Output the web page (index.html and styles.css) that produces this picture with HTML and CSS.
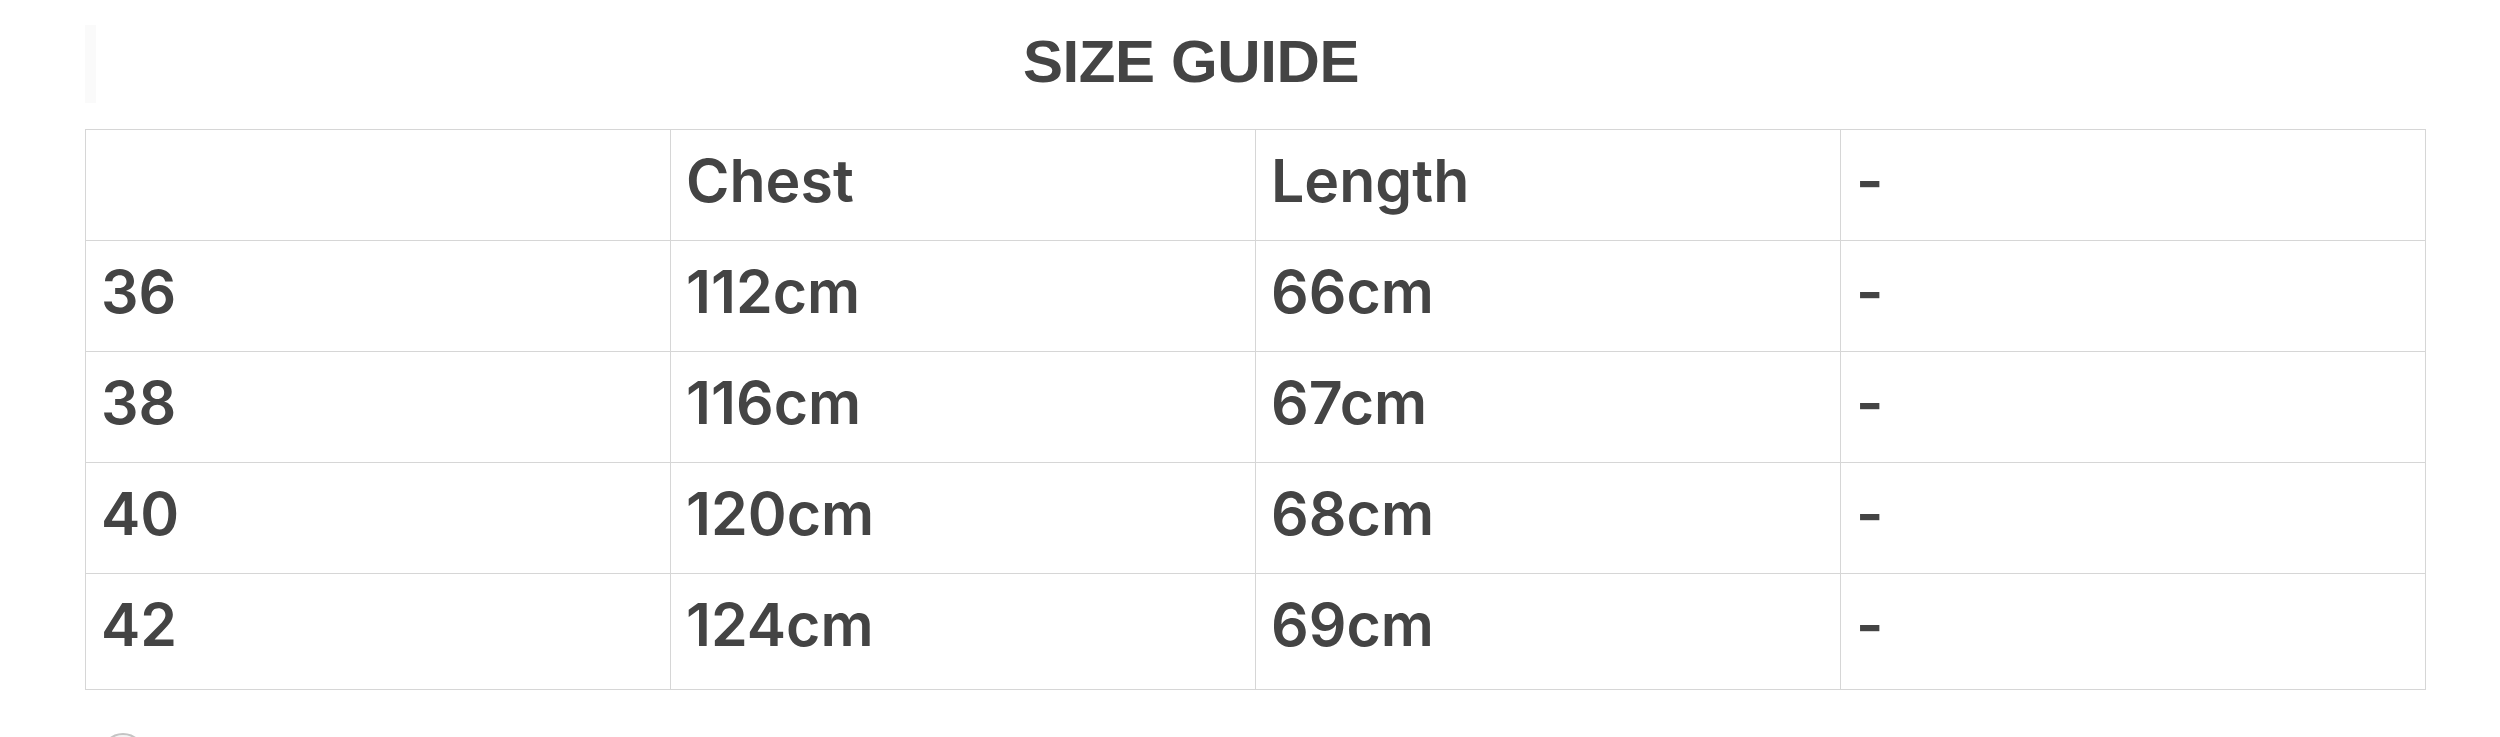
FILE: index.html
```html
<!DOCTYPE html>
<html lang="en">
<head>
<meta charset="utf-8">
<title>Size Guide</title>
<link rel="stylesheet" href="styles.css">
</head>
<body>
<div class="page">
  <header class="guide-header">
    <div class="edge-strip"></div>
    <h1 class="guide-title">SIZE GUIDE</h1>
  </header>
  <table class="size-table">
    <tbody>
      <tr><td></td><td>Chest</td><td>Length</td><td>-</td></tr>
      <tr><td>36</td><td>112cm</td><td>66cm</td><td>-</td></tr>
      <tr><td>38</td><td>116cm</td><td>67cm</td><td>-</td></tr>
      <tr><td>40</td><td>120cm</td><td>68cm</td><td>-</td></tr>
      <tr class="last-row"><td>42</td><td>124cm</td><td>69cm</td><td>-</td></tr>
    </tbody>
  </table>
  <div class="round-btn"></div>
</div>
</body>
</html>
```

FILE: styles.css
```css
html, body {
  margin: 0;
  padding: 0;
  background: #ffffff;
}

.page {
  padding: 25px 75px 0 85px;
  color: #444444;
}

.guide-header {
  display: flex;
  align-items: flex-start;
  height: 78px;
  margin-bottom: 26px;
}

.edge-strip {
  width: 11px;
  height: 78px;
  background: #fafafa;
  flex: none;
}

.guide-title {
  flex: 1;
  margin: 0;
  padding-right: 139px;
  text-align: center;
  font-family: "Liberation Sans", Arial, sans-serif;
  font-weight: 700;
  font-size: 60px;
  line-height: 74px;
  letter-spacing: -0.4px;
  color: #444444;
}

.size-table {
  width: 2341px;
  table-layout: fixed;
  border-collapse: collapse;
  border: 1px solid #d6d6d6;
  font-family: Inter, Roboto, "Liberation Sans", Arial, sans-serif;
  font-weight: 560;
  font-size: 59px;
  color: #444444;
}

.size-table td {
  border: 1px solid #d6d6d6;
  padding: 16px 15px 24px 15px;
  line-height: 70px;
  height: 70px;
  vertical-align: top;
  text-align: left;
}

.size-table .last-row td {
  padding-bottom: 29px;
}

.round-btn {
  width: 40px;
  height: 40px;
  margin: 43px 0 0 16px;
  border: 2px solid #c4c4c4;
  border-radius: 50%;
  background: #f4f4f4;
}
```
